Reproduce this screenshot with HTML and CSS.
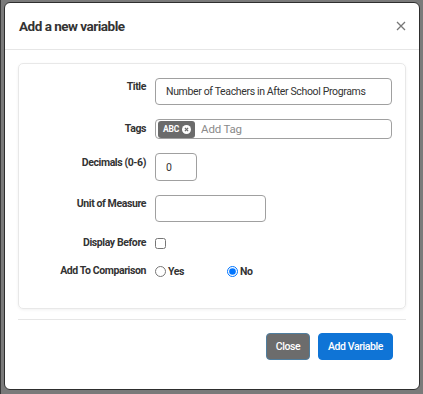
FILE: index.html
```html
<!DOCTYPE html>
<html lang="en">
  <head>
    <meta charset="UTF-8" />
    <meta name="viewport" content="width=device-width, initial-scale=1.0" />
    <title>Add a new variable</title>
    <link rel="stylesheet" href="styles.css">
  </head>
  <body>
    <div class="backdrop">
      <div class="modal">
        <div class="modal-header">
          <h2>Add a new variable</h2>
          <button type="button" class="btn-x" aria-label="Close">
            <svg width="10" height="10" viewBox="0 0 10 10">
              <path d="M1 1L9 9M9 1L1 9" stroke="#777" stroke-width="1.3" fill="none" />
            </svg>
          </button>
        </div>

        <div class="modal-body">
          <form class="card" id="formVariable">
            <label class="field-label" for="title">Title</label>
            <div class="field">
              <input type="text" id="title" class="input input-wide" value="Number of Teachers in After School Programs" />
            </div>

            <label class="field-label label-mid" for="tagInput">Tags</label>
            <div class="field">
              <div class="tags">
                <span class="tag">ABC
                  <svg width="9" height="9" viewBox="0 0 10 10">
                    <circle cx="5" cy="5" r="5" fill="#fff" />
                    <path d="M3.2 3.2L6.8 6.8M6.8 3.2L3.2 6.8" stroke="#6b6b6b" stroke-width="1.4" />
                  </svg>
                </span>
                <input type="text" id="tagInput" class="tag-input" placeholder="Add Tag" />
              </div>
            </div>

            <label class="field-label label-low" for="decimals">Decimals (0-6)</label>
            <div class="field">
              <input type="text" id="decimals" class="input input-small" value="0" />
            </div>

            <label class="field-label" for="unit">Unit of Measure</label>
            <div class="field">
              <input type="text" id="unit" class="input input-mid" />
            </div>

            <label class="field-label label-mid" for="displayBefore">Display Before</label>
            <div class="field">
              <input type="checkbox" id="displayBefore" class="check" />
            </div>

            <span class="field-label label-mid">Add To Comparison</span>
            <div class="field radios">
              <label class="radio"><input type="radio" name="comparison" value="yes" /> Yes</label>
              <label class="radio"><input type="radio" name="comparison" value="no" checked /> No</label>
            </div>
          </form>
        </div>

        <div class="modal-footer">
          <button type="button" class="btn btn-gray">Close</button>
          <button type="submit" class="btn btn-blue" form="formVariable">Add Variable</button>
        </div>
      </div>
    </div>
  </body>
</html>
```

FILE: styles.css
```css
* {
  margin: 0;
  padding: 0;
  box-sizing: border-box;
}

body {
  font-family: Roboto, "Liberation Sans", Arial, sans-serif;
  background-color: #6a6a6a;
  color: #333;
  width: 423px;
  height: 394px;
  overflow: hidden;
}

.backdrop {
  padding: 2px 3px 0 3px;
  height: 394px;
  border-left: 1px solid #3a3a3a;
  background-color: #7a7a7a;
}

.modal {
  width: 416px;
  height: 388px;
  background-color: #fff;
  border: 1px solid #2e2e2e;
  border-radius: 6px;
  display: flex;
  flex-direction: column;
}

.modal-header {
  height: 47px;
  display: flex;
  align-items: center;
  justify-content: space-between;
  padding: 0 11px 1px 14px;
  border-bottom: 1px solid #e6e6e6;
}

.modal-header h2 {
  font-size: 13.5px;
  font-weight: 700;
  letter-spacing: -0.5px;
  color: #333;
}

.btn-x {
  border: none;
  background: none;
  width: 14px;
  height: 14px;
  display: flex;
  align-items: center;
  justify-content: center;
  cursor: pointer;
}

.modal-body {
  padding: 13px 13px 0 13px;
}

.card {
  height: 246px;
  border: 1px solid #e8e8e8;
  border-radius: 5px;
  box-shadow: 0 1px 3px rgba(0, 0, 0, 0.06);
  padding: 14px 13px 0 13px;
  display: grid;
  grid-template-columns: 114px 1fr;
  column-gap: 9px;
  row-gap: 14px;
  align-content: start;
}

.field-label {
  font-size: 10.5px;
  font-weight: 700;
  letter-spacing: -0.4px;
  color: #333;
  text-align: right;
  padding-top: 2px;
  line-height: 14px;
}

.label-mid {
  align-self: center;
  padding-top: 0;
}

.label-low {
  padding-top: 3px;
}

.field {
  display: flex;
  align-items: center;
}

.input {
  height: 27px;
  border: 1px solid #a0a0a0;
  border-radius: 4px;
  padding: 0 10px;
  font-family: Roboto, "Liberation Sans", Arial, sans-serif;
  font-size: 10.5px;
  letter-spacing: -0.35px;
  color: #333;
  background-color: #fff;
}

.input-wide {
  width: 237px;
}

.input-small {
  width: 42px;
  height: 28px;
}

.input-mid {
  width: 111px;
}

.tags {
  width: 237px;
  height: 20px;
  border: 1px solid #a0a0a0;
  border-radius: 4px;
  display: flex;
  align-items: center;
  padding-left: 2px;
  gap: 6px;
}

.tag {
  height: 17px;
  background-color: #6b6b6b;
  color: #fff;
  border-radius: 3px;
  font-size: 8.5px;
  font-weight: 700;
  letter-spacing: -0.2px;
  display: flex;
  align-items: center;
  gap: 3px;
  padding: 0 4px 0 5px;
}

.tag-input {
  border: none;
  outline: none;
  font-family: Roboto, "Liberation Sans", Arial, sans-serif;
  font-size: 11.5px;
  letter-spacing: -0.2px;
  color: #333;
  width: 150px;
  background: none;
}

.tag-input::placeholder {
  color: #8a8a8a;
}

.check {
  width: 11px;
  height: 11px;
  margin: 0;
}

.radios {
  gap: 0;
}

.radio {
  display: flex;
  align-items: center;
  gap: 2px;
  font-size: 10.5px;
  font-weight: 700;
  letter-spacing: -0.4px;
  color: #333;
  width: 72px;
}

.radio input {
  width: 11px;
  height: 11px;
  margin: 0;
}

.modal-footer {
  margin: 10px 13px 0 13px;
  border-top: 1px solid #e6e6e6;
  padding: 13px 13px 0 0;
  display: flex;
  justify-content: flex-end;
  gap: 8px;
}

.btn {
  height: 27px;
  border-radius: 4px;
  font-family: Roboto, "Liberation Sans", Arial, sans-serif;
  font-size: 10.5px;
  font-weight: 500;
  letter-spacing: -0.4px;
  color: #fff;
  cursor: pointer;
}

.btn-gray {
  width: 44px;
  background-color: #6c6c6c;
  border: 1px solid #4f7e9f;
}

.btn-blue {
  width: 75px;
  background-color: #0f74d6;
  border: 1px solid #0f74d6;
}
```
